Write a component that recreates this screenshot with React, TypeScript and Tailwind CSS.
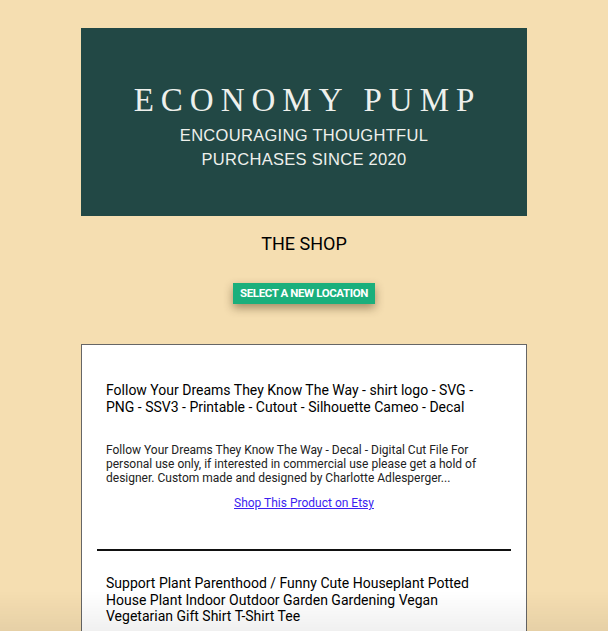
import React from 'react'

interface Product {
  id: string
  title: string
  description?: string
}

const products: Product[] = [
  {
    id: 'dreams',
    title: 'Follow Your Dreams They Know The Way - shirt logo - SVG - PNG - SSV3 - Printable - Cutout - Silhouette Cameo - Decal',
    description:
      'Follow Your Dreams They Know The Way - Decal - Digital Cut File For personal use only, if interested in commercial use please get a hold of designer. Custom made and designed by Charlotte Adlesperger...',
  },
  {
    id: 'plant',
    title: 'Support Plant Parenthood / Funny Cute Houseplant Potted House Plant Indoor Outdoor Garden Gardening Vegan Vegetarian Gift Shirt T-Shirt Tee',
    description:
      'Support Plant Parenthood shirt. Perfect gift for the plant lover in your life...',
  },
]

export default function App() {
  return (
    <div className="min-h-screen bg-[#f5deb1] font-['Roboto',sans-serif] text-black">
      <div className="mx-auto w-[446px] pt-[28px]">
        {/* Banner */}
        <div className="flex h-[188px] flex-col items-center justify-center bg-[#224845] text-[#eef0ec]">
          <div className="mt-[7px] pl-[7px] font-['Liberation_Serif',serif] text-[33px] leading-[40px] tracking-[7px]">
            ECONOMY PUMP
          </div>
          <div className="mt-[3px] text-center font-['Liberation_Sans',sans-serif] text-[16.5px] leading-[24px] tracking-[0.3px]">
            ENCOURAGING THOUGHTFUL
            <br />
            PURCHASES SINCE 2020
          </div>
        </div>

        <h1 className="mt-[16px] text-center text-[18px] leading-[24px]">THE SHOP</h1>

        <div className="mt-[27px] flex justify-center">
          <button className="h-[21px] bg-[#1aaf7c] px-[7px] text-[11.5px] font-bold leading-[21px] tracking-[-0.4px] text-white shadow-[0_4px_10px_rgba(60,40,10,0.45)]">
            SELECT A NEW LOCATION
          </button>
        </div>

        {/* Product list */}
        <div className="mt-[40px] border border-[#666] bg-white pb-[40px]">
          {products.map((p, i) => (
            <div key={p.id}>
              {i > 0 && <div className="mx-[15px] h-[2px] bg-[#111]" />}
              <div className={`px-[24px] ${i === 0 ? 'pt-[37px]' : 'pt-[24px]'}`}>
                <h2 className="text-[14px] leading-[16.5px]">{p.title}</h2>
                <p className="mt-[28px] text-[12px] leading-[14px] text-[#222]">{p.description}</p>
                <div className="mt-[5px] text-center">
                  <a href="#" className="text-[12px] leading-[14px] text-[#3c1ff0] underline">
                    Shop This Product on Etsy
                  </a>
                </div>
              </div>
              <div className="h-[35px]" />
            </div>
          ))}
        </div>
      </div>

      {/* bottom fade of the window */}
      <div className="pointer-events-none fixed inset-x-0 bottom-0 h-[40px] bg-gradient-to-b from-transparent to-[rgba(0,0,0,0.06)]" />
    </div>
  )
}
